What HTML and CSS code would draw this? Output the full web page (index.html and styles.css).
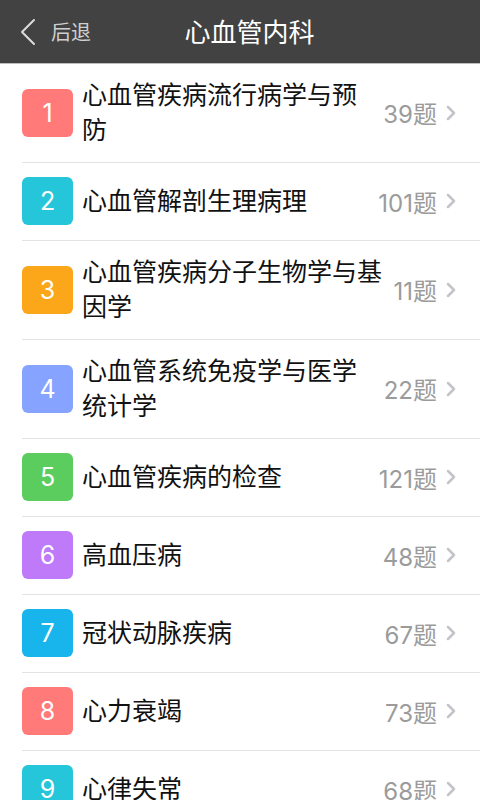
FILE: index.html
```html
<!DOCTYPE html>
<html lang="zh-CN">
<head>
    <meta charset="UTF-8">
    <meta name="viewport" content="width=device-width, initial-scale=1.0">
    <title>心血管内科</title>
    <link rel="stylesheet" href="styles.css">
</head>
<body>

    <header class="topbar">
        <a class="back" href="#">
            <svg class="back-icon" width="16" height="28" viewBox="0 0 16 28">
                <polyline points="14,2 2,14 14,26" fill="none" stroke="#dcdcdc" stroke-width="2" stroke-linecap="round" stroke-linejoin="round"/>
            </svg>
            <span>后退</span>
        </a>
        <h1 class="title">心血管内科</h1>
    </header>

    <ul class="list">
        <li class="row">
            <span class="badge c-red">1</span>
            <span class="name">心血管疾病流行病学与预防</span>
            <span class="count">39题</span>
            <svg class="arrow" width="10" height="16" viewBox="0 0 10 16"><polyline points="2,2 8,8 2,14"/></svg>
        </li>
        <li class="row">
            <span class="badge c-cyan">2</span>
            <span class="name">心血管解剖生理病理</span>
            <span class="count">101题</span>
            <svg class="arrow" width="10" height="16" viewBox="0 0 10 16"><polyline points="2,2 8,8 2,14"/></svg>
        </li>
        <li class="row">
            <span class="badge c-orange">3</span>
            <span class="name">心血管疾病分子生物学与基因学</span>
            <span class="count">11题</span>
            <svg class="arrow" width="10" height="16" viewBox="0 0 10 16"><polyline points="2,2 8,8 2,14"/></svg>
        </li>
        <li class="row">
            <span class="badge c-blue">4</span>
            <span class="name">心血管系统免疫学与医学统计学</span>
            <span class="count">22题</span>
            <svg class="arrow" width="10" height="16" viewBox="0 0 10 16"><polyline points="2,2 8,8 2,14"/></svg>
        </li>
        <li class="row">
            <span class="badge c-green">5</span>
            <span class="name">心血管疾病的检查</span>
            <span class="count">121题</span>
            <svg class="arrow" width="10" height="16" viewBox="0 0 10 16"><polyline points="2,2 8,8 2,14"/></svg>
        </li>
        <li class="row">
            <span class="badge c-purple">6</span>
            <span class="name">高血压病</span>
            <span class="count">48题</span>
            <svg class="arrow" width="10" height="16" viewBox="0 0 10 16"><polyline points="2,2 8,8 2,14"/></svg>
        </li>
        <li class="row">
            <span class="badge c-sky">7</span>
            <span class="name">冠状动脉疾病</span>
            <span class="count">67题</span>
            <svg class="arrow" width="10" height="16" viewBox="0 0 10 16"><polyline points="2,2 8,8 2,14"/></svg>
        </li>
        <li class="row">
            <span class="badge c-red">8</span>
            <span class="name">心力衰竭</span>
            <span class="count">73题</span>
            <svg class="arrow" width="10" height="16" viewBox="0 0 10 16"><polyline points="2,2 8,8 2,14"/></svg>
        </li>
        <li class="row">
            <span class="badge c-cyan">9</span>
            <span class="name">心律失常</span>
            <span class="count">68题</span>
            <svg class="arrow" width="10" height="16" viewBox="0 0 10 16"><polyline points="2,2 8,8 2,14"/></svg>
        </li>
    </ul>

</body>
</html>
```

FILE: styles.css
```css
body {
    font-family: Inter, "Noto Sans CJK SC", sans-serif;
    background-color: #ffffff;
    margin: 0;
}
.topbar {
    height: 63px;
    background-color: #424242;
    border-bottom: 1px solid #bdbdbd;
    display: flex;
    align-items: center;
}
.back {
    display: flex;
    align-items: center;
    margin-left: 20px;
    color: #cfcfcf;
    font-size: 20px;
    text-decoration: none;
}
.back-icon {
    margin-right: 15px;
}
.title {
    flex: 1;
    margin: 0 0 2px;
    padding-right: 72px;
    text-align: center;
    color: #ffffff;
    font-size: 26px;
    font-weight: normal;
    white-space: nowrap;
}
.list {
    list-style: none;
    margin: 0;
    padding: 0;
}
.row {
    display: flex;
    align-items: center;
    margin-left: 22px;
    padding: 14px 0 15px;
    border-bottom: 1px solid #e3e3e3;
}
.badge {
    flex: none;
    width: 51px;
    height: 48px;
    border-radius: 6px;
    color: #ffffff;
    font-size: 25px;
    display: flex;
    align-items: center;
    justify-content: center;
}
.c-red { background-color: #ff7a78; }
.c-cyan { background-color: #26c6da; }
.c-orange { background-color: #fba719; }
.c-blue { background-color: #86a4ff; }
.c-green { background-color: #5bcc5e; }
.c-purple { background-color: #bf7afa; }
.c-sky { background-color: #18b4ec; }
.name {
    flex: 1;
    min-width: 0;
    margin-left: 9px;
    padding-right: 5px;
    font-size: 25px;
    line-height: 34.5px;
    color: #111111;
}
.count {
    flex: none;
    font-size: 24px;
    color: #9b9b9b;
    white-space: nowrap;
}
.arrow {
    flex: none;
    margin: 0 24px 0 9px;
    fill: none;
    stroke: #c4c4c8;
    stroke-width: 2.5;
    stroke-linecap: round;
    stroke-linejoin: round;
}
```
